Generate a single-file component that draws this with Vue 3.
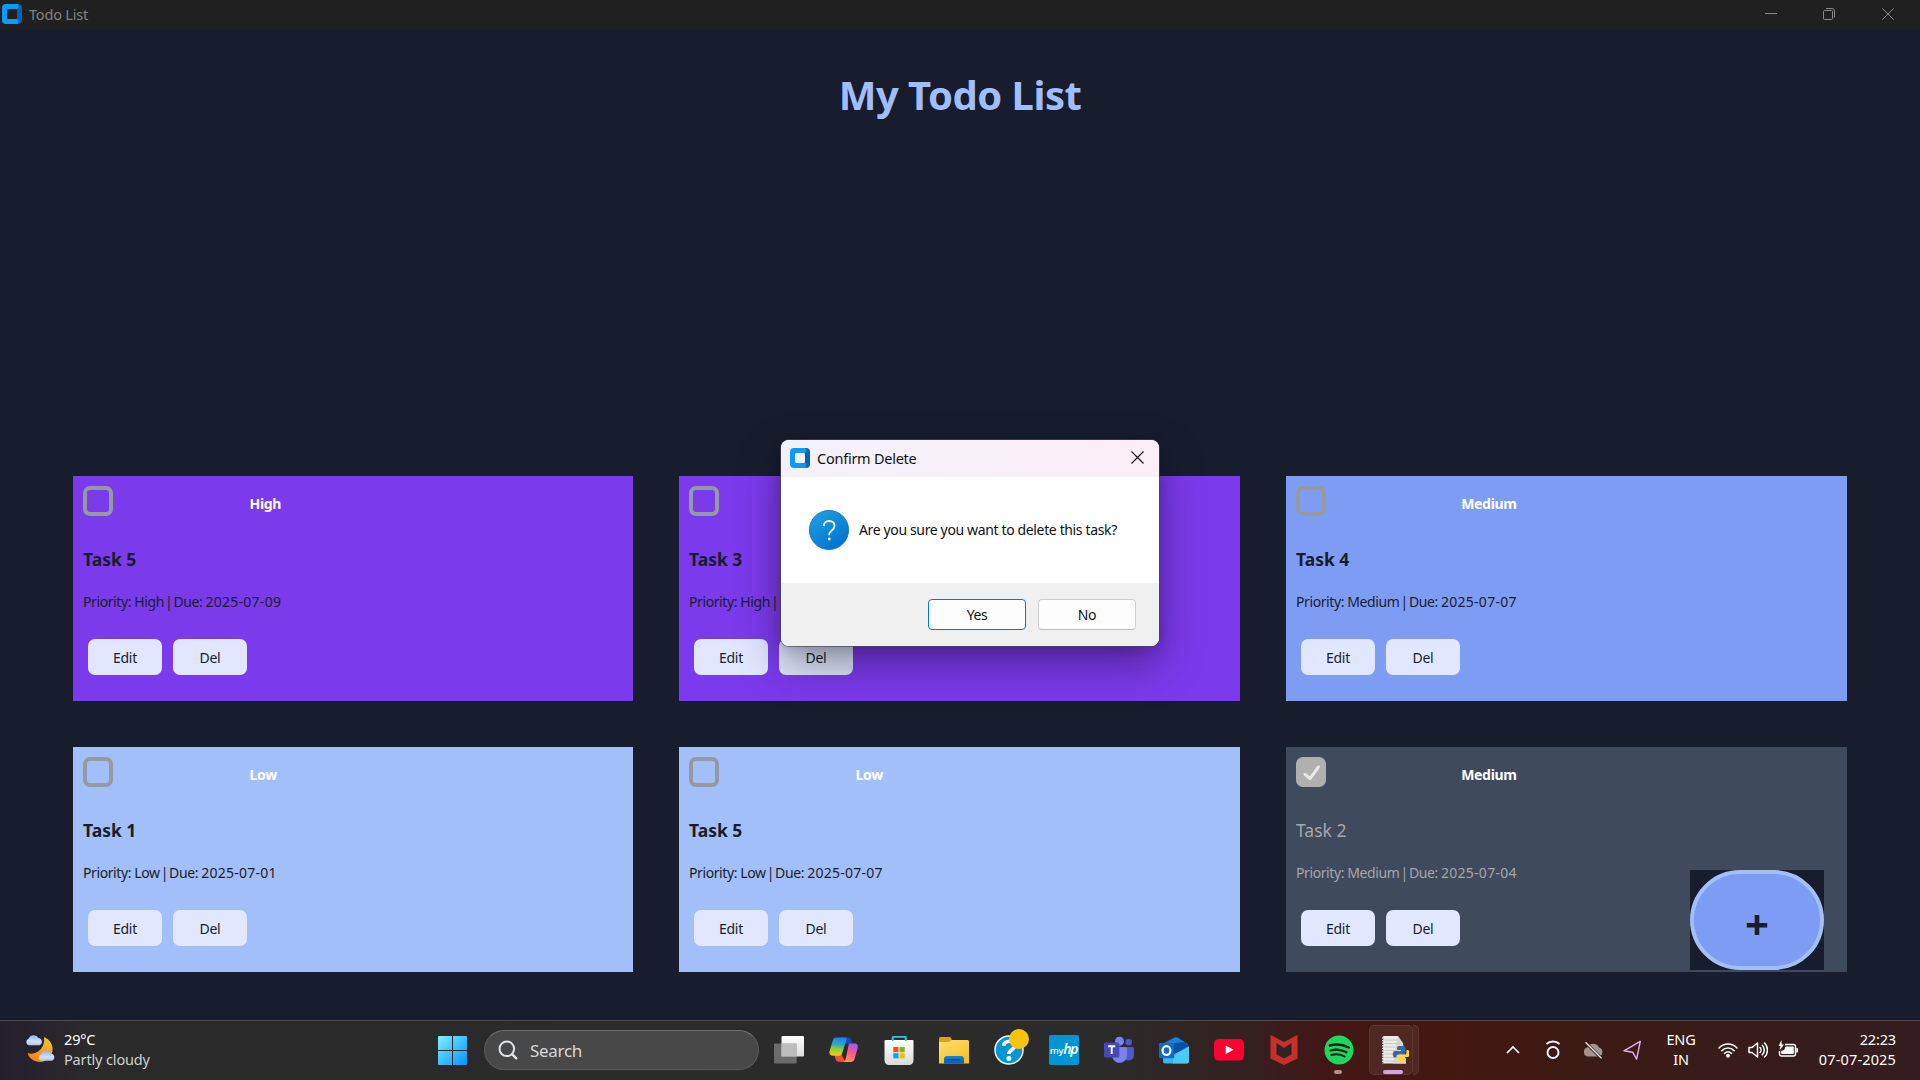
<script setup>
const tasks = [
  { title: 'Task 5', priority: 'High', due: '2025-07-09' },
  { title: 'Task 3', priority: 'High', due: '2025-07-05' },
  { title: 'Task 4', priority: 'Medium', due: '2025-07-07' },
  { title: 'Task 1', priority: 'Low', due: '2025-07-01' },
  { title: 'Task 5', priority: 'Low', due: '2025-07-07' },
  { title: 'Task 2', priority: 'Medium', due: '2025-07-04', done: true },
]
</script>

<template>
  <div class="screen">
    <header class="titlebar">
      <svg class="app-icon" viewBox="0 0 20 20">
        <path d="M14 0h2a4 4 0 0 1 4 4v12a4 4 0 0 1-4 4h-2z" fill="#0063b5" />
        <path d="M4 0h11a1.500 2.300 0 0 1 0 4.600V15.400a1.500 2.300 0 0 1 0 4.600H4a4 4 0 0 1-4-4V4a4 4 0 0 1 4-4z" fill="#069cff" />
        <rect x="5" y="5" width="10" height="10" rx="1" fill="#202020" />
      </svg>
      <span class="window-title">Todo List</span>
      <svg class="window-controls" viewBox="0 0 130 14" fill="none" stroke="#8a8a8a">
        <path d="M0 6.500h12" />
        <rect x="58.500" y="3.500" width="9" height="9" rx="1" />
        <path d="M61 1.500h6a2.500 2.500 0 0 1 2.500 2.500v6.500" />
        <path d="M117.300 1.300l11.400 11.400M128.700 1.300l-11.400 11.400" />
      </svg>
    </header>

    <main class="board">
      <h1>My Todo List</h1>
      <div class="cards">
        <article
          v-for="(t, i) in tasks"
          :key="i"
          class="card"
          :class="[t.priority.toLowerCase(), { done: t.done }]"
        >
          <div class="info">
            <div class="head">
              <span class="check">
                <svg v-if="t.done" viewBox="0 0 30 30" fill="none" stroke="#e8e8e8" stroke-width="3" stroke-linecap="round" stroke-linejoin="round">
                  <path d="M9 17.300l5 4.200L22.500 10" />
                </svg>
              </span>
              <span class="badge">{{ t.priority }}</span>
            </div>
            <h2>{{ t.title }}</h2>
            <p>Priority: {{ t.priority }} <span class="bar">|</span> Due: <span class="date">{{ t.due }}</span></p>
          </div>
          <div class="actions">
            <button>Edit</button>
            <button>Del</button>
          </div>
        </article>
      </div>
      <div class="fab-wrap"><button class="fab">+</button></div>
    </main>

    <section class="dialog">
      <div class="dialog-head">
        <svg class="app-icon" viewBox="0 0 20 20">
          <path d="M14 0h2a4 4 0 0 1 4 4v12a4 4 0 0 1-4 4h-2z" fill="#0063b5" />
          <path d="M4 0h11a1.500 2.300 0 0 1 0 4.600V15.400a1.500 2.300 0 0 1 0 4.600H4a4 4 0 0 1-4-4V4a4 4 0 0 1 4-4z" fill="#069cff" />
          <rect x="5" y="5" width="10" height="10" rx="1.500" fill="#f6f0f9" />
        </svg>
        <span>Confirm Delete</span>
        <svg class="close" viewBox="0 0 13 13" fill="none" stroke="#1c1c1c" stroke-width="1.200">
          <path d="M.5.5l12 12M12.500.5l-12 12" />
        </svg>
      </div>
      <div class="dialog-body">
        <svg class="question" viewBox="0 0 40 40">
          <defs>
            <linearGradient id="q" x1="0" y1="0" x2=".7" y2="1">
              <stop offset="0" stop-color="#21a3e4" /><stop offset="1" stop-color="#0072cf" />
            </linearGradient>
          </defs>
          <circle cx="20" cy="20" r="19.600" fill="url(#q)" stroke="#0a6fb8" stroke-width=".8" />
          <path d="M14.700 16c0-3 2.300-5 5.400-5 3.200 0 5.400 1.900 5.400 4.700 0 4.700-5.300 4.700-5.300 8.800v.8" fill="none" stroke="#fff" stroke-width="1.800" />
          <circle cx="20.200" cy="29" r="1.400" fill="#fff" />
        </svg>
        <span>Are you sure you want to delete this task?</span>
      </div>
      <div class="dialog-foot">
        <button class="primary">Yes</button>
        <button>No</button>
      </div>
    </section>

    <footer class="taskbar">
      <div class="weather">
        <svg viewBox="0 0 30 30">
          <defs>
            <linearGradient id="moon" x1=".7" y1="0" x2=".3" y2="1">
              <stop offset="0" stop-color="#f2c230" /><stop offset="1" stop-color="#f5801c" />
            </linearGradient>
            <linearGradient id="cloud" x1="0" y1="0" x2="0" y2="1">
              <stop offset="0" stop-color="#8fb2f2" /><stop offset=".6" stop-color="#cfe0fb" /><stop offset="1" stop-color="#a9c8f5" />
            </linearGradient>
          </defs>
          <path d="M19 3c5 2 8.600 6.800 8.600 12A13 13 0 0 1 15 28C9 28 4 24.500 2.600 19c9 3 18-5 16.400-16z" fill="url(#moon)" />
          <path d="M3.500 11.300a3.500 3.500 0 0 1 0-6.500A5.500 5.500 0 0 1 13.500 4a3.800 3.800 0 0 1 1 7.300z" fill="url(#cloud)" />
          <path d="M16 26.700a3.300 3.300 0 0 1 0-6.300 5.200 5.200 0 0 1 9.600-.6 3.500 3.500 0 0 1 1 6.900z" fill="url(#cloud)" />
        </svg>
        <div class="lines"><span>29°C</span><span class="dim">Partly cloudy</span></div>
      </div>

      <svg class="start" viewBox="0 0 29 29">
        <defs>
          <linearGradient id="win" x1="0" y1="0" x2="1" y2="1">
            <stop offset="0" stop-color="#7ff0ff" /><stop offset=".5" stop-color="#3fc0ff" /><stop offset="1" stop-color="#0a94ff" />
          </linearGradient>
        </defs>
        <path d="M1 0h13v14H0V1a1 1 0 0 1 1-1zM15 0h13a1 1 0 0 1 1 1v13H15zM0 15h14v14H1a1 1 0 0 1-1-1zM15 15h14v13a1 1 0 0 1-1 1H15z" fill="url(#win)" />
      </svg>

      <div class="search">
        <svg viewBox="0 0 20 20" fill="none" stroke="#dfe4e8" stroke-width="2" stroke-linecap="round">
          <circle cx="8.800" cy="8.800" r="7.300" /><path d="M14.300 14.300l4 4" stroke-width="2.400" />
        </svg>
        <span>Search</span>
      </div>

      <nav class="apps">
        <span class="slot">
          <svg viewBox="0 0 30 30">
            <defs>
              <linearGradient id="tvw" x1="0" y1="0" x2="0" y2="1"><stop offset="0" stop-color="#fff" /><stop offset="1" stop-color="#dcdcdc" /></linearGradient>
            </defs>
            <rect x="7.500" y="1" width="22.500" height="20.500" rx="1" fill="url(#tvw)" />
            <rect x="0" y="8.500" width="22.700" height="20" rx="1" fill="#8b8b8b" fill-opacity=".68" />
            <rect x="7.500" y="8.500" width="15.200" height="13" fill="#bdbdbd" />
          </svg>
        </span>
        <span class="slot">
          <svg viewBox="0 0 30 30">
            <defs>
              <linearGradient id="cpa" x1=".4" y1="0" x2=".3" y2="1"><stop offset="0" stop-color="#1a86e8" /><stop offset=".35" stop-color="#2ea3c8" /><stop offset=".6" stop-color="#8ec93e" /><stop offset="1" stop-color="#f7cb15" /></linearGradient>
              <linearGradient id="cpb" x1=".6" y1="0" x2=".3" y2="1"><stop offset="0" stop-color="#a45cf0" /><stop offset=".45" stop-color="#f0598d" /><stop offset="1" stop-color="#ff9a52" /></linearGradient>
            </defs>
            <path d="M12 2.500h7c2 0 2.700 1 3.300 3l1 3h-5c-2 0-3 1-3.600 3z" fill="#1748c8" />
            <path d="M5.500 20.500l7-1 4 7.500h-5c-3 0-4.500-.8-5.200-3.500z" fill="#f0513a" />
            <path d="M7.200 2.500H16c2 0 1.800 1 1.200 3l-4 12.500c-.7 2-1.500 2.800-3.500 2.800H4c-3 0-4.200-2-3.300-5L3.600 6c.8-2.500 1.600-3.500 3.600-3.500z" fill="url(#cpa)" />
            <path d="M20.500 8.500h5c3 0 3.800 2 3 5L26 22.500c-.8 3-2 4.500-4.500 4.500h-8c2 0 2.700-1.500 3.300-3.500l2.500-12c.4-2 .2-3 1.200-3z" fill="url(#cpb)" />
          </svg>
        </span>
        <span class="slot">
          <svg viewBox="0 0 30 30">
            <defs>
              <linearGradient id="store" x1="0" y1="0" x2="0" y2="1"><stop offset="0" stop-color="#fff" /><stop offset="1" stop-color="#d9d9d9" /></linearGradient>
            </defs>
            <path d="M8.700 6V1.800h13V6" fill="none" stroke="#2fc0f5" stroke-width="1.700" stroke-linejoin="round" />
            <path d="M1.500 5h27a1 1 0 0 1 1 1v19.500a4.500 4.500 0 0 1-4.500 4.500H5a4.500 4.500 0 0 1-4.500-4.500V6a1 1 0 0 1 1-1z" fill="url(#store)" />
            <path d="M8.700 6V2.600M21.700 6V2.600" stroke="#2fc0f5" stroke-width="1.700" />
            <path d="M9.300 12h5.200v5.200H9.300z" fill="#f25022" /><path d="M15.500 12h5.200v5.200h-5.200z" fill="#7fba00" />
            <path d="M9.300 18.200h5.200v5.200H9.300z" fill="#00a4ef" /><path d="M15.500 18.200h5.200v5.200h-5.200z" fill="#ffb900" />
          </svg>
        </span>
        <span class="slot">
          <svg viewBox="0 0 30 30">
            <defs>
              <linearGradient id="fold" x1="0" y1="0" x2=".6" y2="1"><stop offset="0" stop-color="#ffe07a" /><stop offset="1" stop-color="#fbbf1f" /></linearGradient>
              <linearGradient id="foldb" x1="0" y1="0" x2="0" y2="1"><stop offset="0" stop-color="#1385dc" /><stop offset="1" stop-color="#0a5cae" /></linearGradient>
            </defs>
            <path d="M0 3.500A1.500 1.500 0 0 1 1.500 2h8.800c1.200 0 1.500.6 2.500 2.500L9 10H0z" fill="#e0a112" />
            <path d="M0 7h9.500c1.500 0 2-2 3.500-2h15.500A1.500 1.500 0 0 1 30 6.500v22H0z" fill="url(#fold)" />
            <path d="M5 28.500V24a3 3 0 0 1 3-3h14a3 3 0 0 1 3 3v4.500z" fill="url(#foldb)" />
            <path d="M8.500 24.700h13" stroke="#074684" stroke-width="1.300" />
          </svg>
        </span>
        <span class="slot">
          <svg viewBox="0 0 30 30">
            <circle cx="15" cy="15" r="14" fill="#0096d6" stroke="#f3f9fc" stroke-width="1.500" />
            <path d="M9.700 10.800c.3-3 2.700-4.600 6-4.600 3.200 0 5.300 1.500 5.300 4.100 0 4.200-6 4.200-6.200 8.900" fill="none" stroke="#fff" stroke-width="3.600" />
            <circle cx="14.900" cy="23.500" r="2.500" fill="#fff" />
          </svg>
          <i class="dot"></i>
        </span>
        <span class="slot"><span class="myhp"><small>my</small>hp</span></span>
        <span class="slot">
          <svg viewBox="0 0 30 30">
            <circle cx="24.700" cy="7.300" r="3.300" fill="#5059c9" />
            <path d="M20 12h8.500A1.500 1.500 0 0 1 30 13.500V20a5.500 5.500 0 0 1-8 5z" fill="#5059c9" />
            <circle cx="15.500" cy="6.300" r="4.500" fill="#7b83eb" />
            <path d="M9 12h12.500a1.500 1.500 0 0 1 1.500 1.500V20a7.500 7.500 0 0 1-14.500 3z" fill="#7b83eb" />
            <rect x="0" y="7.500" width="15.300" height="15" rx="1.500" fill="#4549b5" />
            <path d="M4.200 11.200h7M7.700 11.200V19" stroke="#fff" stroke-width="1.900" />
          </svg>
        </span>
        <span class="slot">
          <svg viewBox="0 0 30 30">
            <path d="M4 8.500L15.500 2.500c1-.5 2-.5 3 0L28 8.500l2 3.500L4 22z" fill="#1583d8" />
            <path d="M15 8l11-1 3.500 4L15 20z" fill="#0b4fa5" />
            <path d="M4 15l10 5L30 11.500V26a2.500 2.500 0 0 1-2.500 2.500h-21A2.500 2.500 0 0 1 4 26z" fill="#32b8f0" />
            <path d="M14 20l16-8.500V26a2.500 2.500 0 0 1-2.500 2.500H14z" fill="#55d2f8" opacity=".7" />
            <rect x="0" y="8" width="15.300" height="15.300" rx="1.200" fill="#0f6cc4" />
            <ellipse cx="7.500" cy="15.600" rx="3.900" ry="4.400" fill="none" stroke="#fff" stroke-width="2.200" />
          </svg>
        </span>
        <span class="slot">
          <svg viewBox="0 0 30 30">
            <rect x="0" y="4" width="30" height="21.500" rx="4.500" fill="#ff0033" />
            <path d="M11.700 10.500l8 4.300-8 4.300z" fill="#fff" />
          </svg>
        </span>
        <span class="slot">
          <svg viewBox="0 0 30 30">
            <path d="M1.500 0L15 7 28.500 0v23.500L15 30 1.500 23.500z" fill="#c52f2c" />
            <path d="M7.500 8L15 13l7.500-5v11.500L15 23.500l-7.500-4z" fill="#302325" />
          </svg>
        </span>
        <span class="slot">
          <svg viewBox="0 0 30 30">
            <circle cx="15" cy="15" r="14.500" fill="#1ed760" />
            <g fill="none" stroke="#122014" stroke-linecap="round">
              <path d="M5.800 10.500c6-1.800 13-1.300 19 2" stroke-width="2.500" />
              <path d="M6.500 15.500c5-1.500 11-1 16 1.800" stroke-width="2.200" />
              <path d="M7.200 20c4.500-1.200 9.300-.8 13.500 1.600" stroke-width="1.900" />
            </g>
          </svg>
          <i class="run"></i>
        </span>
        <span class="slot active">
          <i class="stack"></i>
          <i class="tile"></i>
          <svg viewBox="0 0 30 30">
            <path d="M3 1h16l8 27.500H3z" fill="#eceae5" />
            <path d="M19 1l5 7 3 20.500H14z" fill="#d8d6d1" />
            <path d="M5.500 5h13M5.500 8.500h15M5.500 12h15M5.500 15.500h12M5.500 19h10M5.500 22.500h10M5.500 26h11" stroke="#c2c0bb" stroke-width=".8" />
            <path d="M3.500 1v27.500" stroke="#4a4544" stroke-width="1.600" stroke-dasharray="1.300 1.300" />
            <path d="M20 11h4.500a2 2 0 0 1 2 2v4.500a2 2 0 0 1-2 2h-5a2 2 0 0 0-2 2v1H15.500c-2 0-2.500-6 0-6.500H22v-1h-4v-2a2 2 0 0 1 2-2z" fill="#2f6da6" />
            <path d="M27.500 15h1.300c2.500 0 2.700 6.500 0 7H24v1.200h3v1.500a2 2 0 0 1-2 2h-4.500a2 2 0 0 1-2-2V21.700a2 2 0 0 1 2-2h5a2 2 0 0 0 2-2z" fill="#ffd53f" />
          </svg>
          <i class="run wide"></i>
        </span>
      </nav>

      <div class="tray">
        <svg class="chevron" viewBox="0 0 14 20" fill="none" stroke="#fff" stroke-width="1.700"><path d="M1 13l6-6 6 6" /></svg>
        <svg class="ring" viewBox="0 0 16 20" fill="none" stroke="#e9f3ff" stroke-width="2">
          <circle cx="8" cy="12.500" r="5.500" /><path d="M1.500 4C5 .8 11 .8 14.500 4" />
        </svg>
        <svg class="cloud" viewBox="0 0 20 20">
          <path d="M5 16.500a4.700 4.700 0 0 1-.6-9.200A6.500 6.500 0 0 1 16 7.500a4.600 4.600 0 0 1-.6 9z" fill="#a29490" />
          <path d="M1.500 1.500l17 17" stroke="#3a1b17" stroke-width="3" /><path d="M2.500 2.200l16 16" stroke="#eee" stroke-width="1.300" />
        </svg>
        <svg class="arrow" viewBox="0 0 20 20" fill="none" stroke="#e6aef0" stroke-width="1.500" stroke-linejoin="round"><path d="M18.200 1L1 10.800l9.200 1.500L14.300 19.500z" /></svg>
        <div class="lang"><span>ENG</span><span>IN</span></div>
        <svg class="status" viewBox="0 0 20 20" fill="none" stroke="#fff" stroke-width="1.500" stroke-linecap="round">
          <path d="M1 8c5-5.200 13-5.200 18 0M3.800 10.800c3.500-3.600 8.900-3.600 12.400 0M6.600 13.400c2-2 4.800-2 6.800 0" /><circle cx="10" cy="15.700" r="1.200" fill="#fff" />
        </svg>
        <svg class="status" viewBox="0 0 20 20" fill="none" stroke="#fff" stroke-width="1.500" stroke-linecap="round" stroke-linejoin="round">
          <path d="M1 7.500h3L9.500 3v14L4 12.500H1zM12 7.500c1.300 1.300 1.300 3.700 0 5M14.300 5.200c2.600 2.600 2.600 7 0 9.600M16.600 3c3.800 3.800 3.800 10.200 0 14" />
        </svg>
        <svg class="status" viewBox="0 0 20 20">
          <path d="M7 4.500h8.500a2 2 0 0 1 2 2v7.500a2 2 0 0 1-2 2h-12a2 2 0 0 1-2-2V11" fill="none" stroke="#fff" stroke-width="1.400" />
          <path d="M7.500 6.500H15a.8.8 0 0 1 .8.800v6a.8.8 0 0 1-.8.800H4a.8.8 0 0 1-.8-.8V11l3-1z" fill="#fff" />
          <path d="M18.300 8h.7a1 1 0 0 1 1 1v2.500a1 1 0 0 1-1 1h-.7z" fill="#fff" />
          <path d="M3.500 0L.5 6h2L1.500 10.500 6 4.500H3.700z" fill="#fff" />
        </svg>
        <div class="clock"><span>22:23</span><span class="day">07-07-2025</span></div>
      </div>
    </footer>
  </div>
</template>

<style>
body {
  overflow: hidden;
  background: #181d2e;
}
</style>

<style scoped>
.screen {
  position: relative;
  display: flex;
  flex-direction: column;
  width: 1920px;
  height: 1080px;
  background: #181d2e;
  font-family: 'Noto Sans', 'Open Sans', sans-serif;
}
svg {
  display: block;
  flex: none;
}
button {
  font-family: inherit;
  border: 0;
  padding: 0;
}
.titlebar {
  display: flex;
  align-items: center;
  box-sizing: border-box;
  height: 29px;
  padding: 0 25px 1px 2px;
  background: #202020;
  color: #808080;
}
.app-icon {
  width: 20px;
  height: 20px;
}
.window-title {
  flex: 1;
  margin-left: 7px;
  font-size: 14.500px;
  letter-spacing: -0.2px;
}
.window-controls {
  width: 130px;
  height: 14px;
}
.board {
  position: relative;
  flex: 1;
}
h1 {
  margin: 39px 0 0;
  line-height: 54px;
  text-align: center;
  font-size: 40px;
  font-weight: 700;
  letter-spacing: -0.5px;
  color: #a2befa;
}
.cards {
  display: grid;
  grid-template-columns: 560px 561px 561px;
  gap: 46px;
  margin: 354px 73px 0;
}
.card {
  box-sizing: border-box;
  height: 225px;
  padding: 10px;
  color: #181d2e;
}
.high { background: #7c3aed; }
.medium { background: #7f9cf5; }
.low { background: #a3bffa; }
.done {
  background: #3f4a5c;
  color: #a5a7a9;
}
.info {
  width: max-content;
}
.head {
  display: flex;
  justify-content: space-between;
  height: 30px;
}
.check {
  box-sizing: border-box;
  width: 30px;
  height: 30px;
  border: 4px solid #949a9f;
  border-radius: 7px;
}
.done .check {
  border: 0;
  background: #b0b0b0;
}
.badge {
  margin-top: 4px;
  line-height: 28px;
  font-size: 14px;
  font-weight: 700;
  letter-spacing: -0.3px;
  color: #fff;
}
h2 {
  margin: 31px 0 0;
  line-height: 24px;
  font-size: 17.500px;
  font-weight: 700;
  letter-spacing: 0;
}
.done h2 {
  font-weight: 400;
}
p {
  margin: 21px 0 0;
  line-height: 20px;
  font-size: 14px;
  letter-spacing: -0.4px;
}
.bar {
  margin: 0 -2.200px;
}
.date {
  letter-spacing: 0.250px;
}
.actions {
  display: flex;
  gap: 11px;
  margin: 27px 0 0 5px;
}
.actions button {
  width: 74px;
  height: 36px;
  border-radius: 7px;
  background: #e0e7ff;
  color: #181d2e;
  font-size: 14px;
  letter-spacing: -0.3px;
  line-height: 37px;
}
.fab-wrap {
  position: absolute;
  left: 1690px;
  top: 841px;
  width: 134px;
  height: 100px;
  background: #181d2e;
}
.fab {
  box-sizing: border-box;
  width: 134px;
  height: 100px;
  padding-top: 7px;
  border: 4px solid #a3bffa;
  border-radius: 50px;
  background: #7f9cf5;
  color: #181d2e;
  font-size: 42px;
  font-weight: 700;
  line-height: 80px;
}
.dialog {
  position: absolute;
  left: 781px;
  top: 440px;
  width: 378px;
  height: 206px;
  overflow: hidden;
  border-radius: 8px;
  background: #fff;
  box-shadow: 0 0 0 1px rgba(70, 70, 80, 0.65), 0 18px 44px rgba(0, 0, 0, 0.38), 0 3px 14px rgba(0, 0, 0, 0.16);
  color: #111;
}
.dialog-head {
  display: flex;
  align-items: center;
  box-sizing: border-box;
  height: 37px;
  padding: 0 15px 2px 9px;
  background: linear-gradient(90deg, #f4f1fa, #faeef7);
  font-size: 14.500px;
  letter-spacing: -0.250px;
}
.dialog-head span {
  flex: 1;
  margin-left: 7px;
}
.close {
  width: 13px;
  height: 13px;
}
.dialog-body {
  display: flex;
  align-items: center;
  gap: 10px;
  height: 106px;
  padding-left: 28px;
  font-size: 14px;
  letter-spacing: -0.360px;
}
.dialog-body span {
  margin-top: -1px;
}
.question {
  width: 40px;
  height: 40px;
}
.dialog-foot {
  display: flex;
  justify-content: flex-end;
  gap: 12px;
  height: 63px;
  padding: 16px 23px 0 0;
  box-sizing: border-box;
  background: #f0f0f0;
}
.dialog-foot button {
  box-sizing: border-box;
  width: 98px;
  height: 31px;
  border: 1px solid #d0d0d0;
  border-bottom-color: #bcbcbc;
  border-radius: 4px;
  background: #fdfdfd;
  color: #111;
  font-size: 14px;
  letter-spacing: -0.4px;
}
.dialog-foot .primary {
  border-color: #0078d4;
}
.taskbar {
  display: flex;
  align-items: center;
  box-sizing: border-box;
  height: 60px;
  padding: 0 24px 1px 25px;
  border-top: 1px solid #4c4a49;
  background: linear-gradient(90deg, #241f2e 0, #2b2a2b 90px, #2b2b2b 1100px, #33211f 1240px, #421715 1330px, #43180f 1450px, #3a1b17 1640px, #341c20 1920px);
  color: #fff;
  font-size: 15px;
}
.weather {
  display: flex;
  align-items: center;
  gap: 9px;
  width: 413px;
}
.weather svg {
  width: 30px;
  height: 30px;
  margin-top: -3px;
}
.lines,
.lang,
.clock {
  display: flex;
  flex-direction: column;
  margin-top: -3px;
  line-height: 20px;
  font-size: 14.500px;
  letter-spacing: -0.150px;
}
.dim {
  color: #cfcfcf;
}
.start {
  width: 29px;
  height: 29px;
}
.search {
  display: flex;
  align-items: center;
  box-sizing: border-box;
  width: 275px;
  height: 40px;
  margin-left: 17px;
  padding-left: 13px;
  border: 1px solid #5a5a5a;
  border-top-color: #717171;
  border-radius: 20px;
  background: #484848;
  color: #d8d8d8;
  font-size: 17px;
  letter-spacing: -0.3px;
}
.search svg {
  width: 20px;
  height: 20px;
  margin-right: 12px;
}
.apps {
  display: flex;
  margin-left: 2px;
}
.slot {
  position: relative;
  display: flex;
  align-items: center;
  justify-content: center;
  width: 55px;
  height: 58px;
}
.slot svg {
  position: relative;
  width: 30px;
  height: 30px;
}
.dot {
  position: absolute;
  left: 28px;
  top: 8px;
  width: 20px;
  height: 20px;
  border-radius: 50%;
  background: #ffc20e;
}
.myhp {
  width: 30px;
  height: 30px;
  border-radius: 2px;
  background: #0096d6;
  color: #fff;
  text-align: center;
  line-height: 28px;
  font-size: 14px;
  font-style: italic;
  font-weight: 600;
  letter-spacing: -1.300px;
}
.myhp small {
  font-size: 9.500px;
  font-style: normal;
  font-weight: 500;
  letter-spacing: -0.3px;
}
.run {
  position: absolute;
  left: 23px;
  bottom: 5px;
  width: 8px;
  height: 4px;
  border-radius: 2px;
  background: #a89394;
}
.wide {
  left: 17px;
  width: 20px;
  background: #d9a0e3;
}
.tile,
.stack {
  position: absolute;
  box-sizing: border-box;
  top: 4px;
  left: 3px;
  width: 44px;
  height: 50px;
  border: 1px solid rgba(255, 255, 255, 0.08);
  border-radius: 5px;
  background: rgba(255, 255, 255, 0.07);
}
.stack {
  left: 9px;
  clip-path: inset(0 0 0 38px);
}
.tray {
  display: flex;
  align-items: center;
  margin-left: auto;
}
.tray svg {
  height: 20px;
}
.chevron {
  width: 14px;
  margin-right: 25px;
}
.ring {
  width: 16px;
  margin-right: 22px;
}
.cloud {
  width: 20px;
  margin-right: 20px;
}
.arrow {
  width: 19px;
  margin-right: 20px;
}
.lang {
  align-items: center;
  width: 38px;
  margin-right: 18px;
}
.status {
  width: 20px;
  margin-right: 10px;
}
.clock {
  align-items: flex-end;
  width: 88px;
}
.day {
  letter-spacing: 0.150px;
}
</style>
